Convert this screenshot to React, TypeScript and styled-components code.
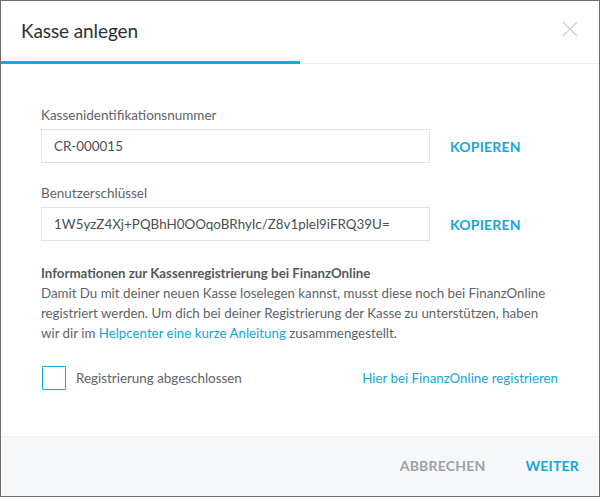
import React from "react";
import styled, { createGlobalStyle } from "styled-components";

const Global = createGlobalStyle`
  html, body { margin: 0; padding: 0; background: #fff; }
  body { font-family: "Lato", "Noto Sans", sans-serif; -webkit-font-smoothing: antialiased; }
  * { box-sizing: border-box; }
`;

const Dialog = styled.div`
  width: 600px;
  height: 497px;
  border: 1px solid #6e6e6e;
  background: #fff;
  display: flex;
  flex-direction: column;
`;

const Header = styled.div`
  position: relative;
  height: 63px;
  border-bottom: 1px solid #eceff1;
  display: flex;
  align-items: center;
  padding: 0 20px 4px;
`;

const Title = styled.h1`
  margin: 0;
  font-size: 19px;
  font-weight: 400;
  color: #2b3136;
  letter-spacing: -0.1px;
`;

const Close = styled.button`
  margin-left: auto;
  width: 16px;
  height: 16px;
  padding: 0;
  border: 0;
  background: none;
  margin-right: 1px;
  margin-top: -2px;
  display: flex;
`;

const Progress = styled.div<{ $pct: number }>`
  position: absolute;
  left: 0;
  bottom: -1px;
  height: 3px;
  width: ${(p) => p.$pct}%;
  background: #11a8de;
`;

const Body = styled.div`
  flex: 1;
  padding: 42px 40px 0 40px;
  display: flex;
  flex-direction: column;
`;

const Field = styled.div<{ $gap?: number }>`
  display: flex;
  flex-direction: column;
  margin-bottom: ${(p) => p.$gap ?? 0}px;
`;

const Label = styled.label`
  font-size: 13.5px;
  line-height: 18px;
  color: #5d6368;
  margin-bottom: 5px;
`;

const Row = styled.div`
  display: flex;
  align-items: center;
`;

const Input = styled.div`
  width: 389px;
  height: 34px;
  border: 1px solid #dfe4e6;
  padding: 0 12px;
  display: flex;
  align-items: center;
  font-size: 13.4px;
  color: #4a4f53;
  white-space: nowrap;
  overflow: hidden;
`;

const TextButton = styled.button<{ $muted?: boolean }>`
  border: 0;
  background: none;
  padding: 0;
  font-family: inherit;
  font-weight: 700;
  font-size: 14px;
  letter-spacing: 0.2px;
  color: ${(p) => (p.$muted ? "#9ea2a5" : "#15a6dc")};
  cursor: pointer;
`;

const CopyButton = styled(TextButton)`
  margin-left: 20px;
`;

const Info = styled.div`
  font-size: 13.3px;
  line-height: 20px;
  color: #5d6368;
`;

const InfoTitle = styled.div`
  font-weight: 700;
  color: #53585c;
`;

const Link = styled.a`
  color: #15a6dc;
  text-decoration: none;
`;

const CheckRow = styled.div`
  display: flex;
  align-items: center;
  margin-top: 23px;
`;

const Box = styled.span`
  width: 24px;
  height: 24px;
  border: 1.5px solid #15a6dc;
  border-radius: 1px;
  margin-left: 1px;
  margin-right: 10px;
`;

const CheckText = styled.span`
  font-size: 13.4px;
  color: #5d6368;
`;

const RightLink = styled(Link)`
  margin-left: auto;
  margin-right: 1px;
  font-size: 13.3px;
`;

const Footer = styled.div`
  height: 60px;
  background: #f6f7f8;
  border-top: 1px solid #eef0f2;
  display: flex;
  align-items: center;
  justify-content: flex-end;
  gap: 40px;
  padding: 0 20px 2px;
`;

export default function App() {
  return (
    <>
      <Global />
      <Dialog>
        <Header>
          <Title>Kasse anlegen</Title>
          <Close aria-label="Schließen">
            <svg width="16" height="16" viewBox="0 0 16 16">
              <path d="M1 1 L15 15 M15 1 L1 15" stroke="#c9cdd0" strokeWidth="1.2" fill="none" />
            </svg>
          </Close>
          <Progress $pct={50} />
        </Header>
        <Body>
          <Field $gap={21}>
            <Label>Kassenidentifikationsnummer</Label>
            <Row>
              <Input>CR-000015</Input>
              <CopyButton>KOPIEREN</CopyButton>
            </Row>
          </Field>
          <Field $gap={22}>
            <Label>Benutzerschlüssel</Label>
            <Row>
              <Input>1W5yzZ4Xj+PQBhH0OOqoBRhyIc/Z8v1plel9iFRQ39U=</Input>
              <CopyButton>KOPIEREN</CopyButton>
            </Row>
          </Field>
          <Info>
            <InfoTitle>Informationen zur Kassenregistrierung bei FinanzOnline</InfoTitle>
            Damit Du mit deiner neuen Kasse loselegen kannst, musst diese noch bei FinanzOnline
            <br />
            registriert werden. Um dich bei deiner Registrierung der Kasse zu unterstützen, haben
            <br />
            wir dir im <Link href="#">Helpcenter eine kurze Anleitung</Link> zusammengestellt.
          </Info>
          <CheckRow>
            <Box />
            <CheckText>Registrierung abgeschlossen</CheckText>
            <RightLink href="#">Hier bei FinanzOnline registrieren</RightLink>
          </CheckRow>
        </Body>
        <Footer>
          <TextButton $muted>ABBRECHEN</TextButton>
          <TextButton>WEITER</TextButton>
        </Footer>
      </Dialog>
    </>
  );
}
